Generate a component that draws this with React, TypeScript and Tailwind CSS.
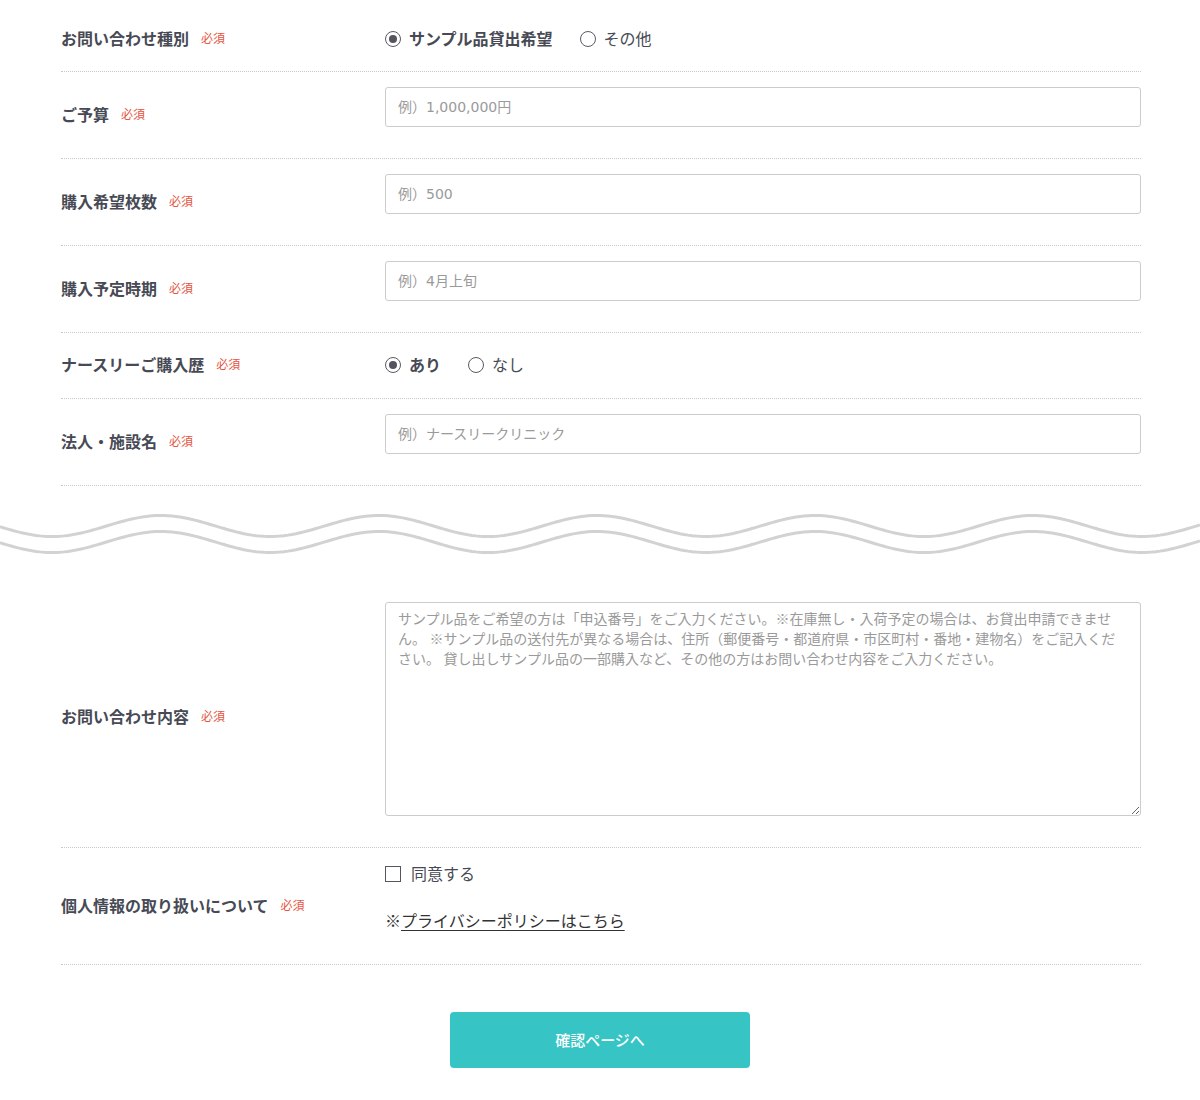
import React from 'react';

const FONT = { fontFamily: '"Lato", "Noto Sans CJK JP", "Noto Sans", sans-serif' };
const INPUT_FONT = { fontFamily: '"DejaVu Sans", "Noto Sans CJK JP", sans-serif' };

// 波線のパスを計算（周期218px）
const wavePath = (center: number) => {
  const pts: string[] = [];
  for (let x = 0; x <= 1200; x += 4) {
    const y = center + 10.5 * Math.cos((2 * Math.PI * (x - 52)) / 218);
    pts.push(`${x === 0 ? 'M' : 'L'}${x},${y.toFixed(2)}`);
  }
  return pts.join(' ');
};

const Required = () => (
  <span className="ml-3 text-[12px] font-normal text-[#e5553f]">必須</span>
);

const Label = ({ children }: { children: React.ReactNode }) => (
  <div className="w-[324px] shrink-0 flex items-center">
    <span className="text-[16px] font-bold text-[#474a54]">{children}</span>
    <Required />
  </div>
);

const Radio = ({ label, checked }: { label: string; checked?: boolean }) => (
  <label className="flex items-center gap-2 cursor-pointer">
    <span className="w-4 h-4 rounded-full border-[1.5px] border-[#5a5a62] flex items-center justify-center">
      {checked && <span className="w-2 h-2 rounded-full bg-[#54545e]" />}
    </span>
    <span className={`text-[16px] text-[#474a54] ${checked ? 'font-bold' : 'font-normal'}`}>{label}</span>
  </label>
);

const TextInput = ({ placeholder }: { placeholder: string }) => (
  <input
    type="text"
    placeholder={placeholder}
    className="w-full h-10 mb-4 border border-[#cccccc] rounded-[3px] px-3 text-[14px] text-[#333] placeholder:text-[#9a9a9a] outline-none"
    style={INPUT_FONT}
  />
);

const rowCls = 'flex border-b border-dotted border-[#c9c9c9]';

export default function App() {
  return (
    <div className="bg-white w-full" style={FONT}>
      <div className="w-[1080px] ml-[61px]">
        <div className={`${rowCls} pt-[22px] pb-[15px]`}>
          <Label>お問い合わせ種別</Label>
          <div className="flex-1 h-[34px] flex items-center gap-[27px]">
            <Radio label="サンプル品貸出希望" checked />
            <Radio label="その他" />
          </div>
        </div>

        <div className={`${rowCls} py-[15px]`}>
          <Label>ご予算</Label>
          <div className="flex-1">
            <TextInput placeholder="例）1,000,000円" />
          </div>
        </div>

        <div className={`${rowCls} py-[15px]`}>
          <Label>購入希望枚数</Label>
          <div className="flex-1">
            <TextInput placeholder="例）500" />
          </div>
        </div>

        <div className={`${rowCls} py-[15px]`}>
          <Label>購入予定時期</Label>
          <div className="flex-1">
            <TextInput placeholder="例）4月上旬" />
          </div>
        </div>

        <div className={`${rowCls} pt-[15px] pb-4`}>
          <Label>ナースリーご購入歴</Label>
          <div className="flex-1 h-[34px] flex items-center gap-[27px]">
            <Radio label="あり" checked />
            <Radio label="なし" />
          </div>
        </div>

        <div className={`${rowCls} py-[15px]`}>
          <Label>法人・施設名</Label>
          <div className="flex-1">
            <TextInput placeholder="例）ナースリークリニック" />
          </div>
        </div>
      </div>

      <div className="w-full h-[100px]">
        <svg width="100%" height="100" viewBox="0 0 1200 100" preserveAspectRatio="none" className="block">
          <path d={wavePath(40)} fill="none" stroke="#d2d2d2" strokeWidth="3" />
          <path d={wavePath(56)} fill="none" stroke="#d2d2d2" strokeWidth="3" />
        </svg>
      </div>

      <div className="w-[1080px] ml-[61px]">
        <div className={`${rowCls} pt-4 pb-[15px]`}>
          <Label>お問い合わせ内容</Label>
          <div className="flex-1">
            <textarea
              className="block w-full h-[214px] mb-4 border border-[#cccccc] rounded-[3px] px-3 py-[6px] text-[14px] leading-[20px] text-[#333] placeholder:text-[#9a9a9a] outline-none"
              style={FONT}
              placeholder="サンプル品をご希望の方は「申込番号」をご入力ください。※在庫無し・入荷予定の場合は、お貸出申請できません。 ※サンプル品の送付先が異なる場合は、住所（郵便番号・都道府県・市区町村・番地・建物名）をご記入ください。 貸し出しサンプル品の一部購入など、その他の方はお問い合わせ内容をご入力ください。"
            />
          </div>
        </div>

        <div className={`${rowCls} pt-[15px] pb-[15px]`}>
          <Label>個人情報の取り扱いについて</Label>
          <div className="flex-1 mb-4">
            <label className="h-[22px] flex items-center gap-[10px]">
              <span className="w-4 h-4 border border-[#55555d] bg-white" />
              <span className="text-[16px] text-[#474a54]">同意する</span>
            </label>
            <div className="mt-6 h-6 flex items-center text-[16px] text-[#333]">
              ※<a href="#" className="underline underline-offset-[3px] text-[#333]">プライバシーポリシーはこちら</a>
            </div>
          </div>
        </div>

        <div className="flex justify-center pt-[47px] pb-8 -ml-[2px]">
          <button
            type="button"
            className="w-[300px] h-14 rounded-[4px] bg-[#37c4c5] text-white text-[15px] font-medium"
            style={FONT}
          >
            確認ページへ
          </button>
        </div>
      </div>
    </div>
  );
}
